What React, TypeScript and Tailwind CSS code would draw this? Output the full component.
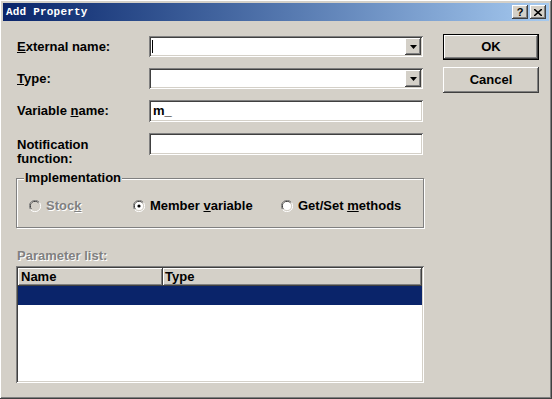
const raised =
  "shadow-[inset_-1px_-1px_0_#404040,inset_1px_1px_0_#ffffff,inset_-2px_-2px_0_#808080,inset_2px_2px_0_#d4d0c8]";
const sunken =
  "shadow-[inset_1px_1px_0_#808080,inset_-1px_-1px_0_#ffffff,inset_2px_2px_0_#404040,inset_-2px_-2px_0_#d4d0c8]";

function DropArrow() {
  return (
    <div className={`w-[16px] h-[17px] bg-[#d4d0c8] flex items-center justify-center ${raised}`}>
      <svg width="7" height="4" viewBox="0 0 7 4">
        <path d="M0 0h7L3.5 4z" fill="#000" />
      </svg>
    </div>
  );
}

function Combo({ caret }: { caret?: boolean }) {
  return (
    <div className={`w-[274px] h-[21px] bg-white flex items-center justify-between pl-[3px] pr-[2px] ${sunken}`}>
      <span className={caret ? "w-px h-[13px] bg-black" : ""} />
      <DropArrow />
    </div>
  );
}

function Edit({ value }: { value?: string }) {
  return (
    <div className={`w-[274px] h-[22px] bg-white flex items-center px-[4px] text-[13px] font-bold ${sunken}`}>
      {value}
    </div>
  );
}

function Radio({ checked, disabled }: { checked?: boolean; disabled?: boolean }) {
  return (
    <svg width="12" height="12" viewBox="0 0 12 12" className="shrink-0">
      <path d="M10.5 2.5A5 5 0 0 0 1.5 9.5" stroke="#808080" fill="none" />
      <path d="M9.5 3A4.3 4.3 0 0 0 2.5 9" stroke="#404040" fill="none" />
      <circle cx="6" cy="6" r="4" fill={disabled ? "#d4d0c8" : "#fff"} />
      <path d="M1.5 9.5A5 5 0 0 0 10.5 2.5" stroke="#fff" fill="none" />
      {checked && <circle cx="6" cy="6" r="1.6" fill="#000" />}
    </svg>
  );
}

function Button({ label, isDefault }: { label: string; isDefault?: boolean }) {
  return (
    <div
      className={`w-[96px] h-[26px] flex items-center justify-center text-[13px] font-bold bg-[#d4d0c8] ${
        isDefault ? "border border-black" : ""
      } ${raised}`}
    >
      {label}
    </div>
  );
}

export default function App() {
  return (
    <div
      className={`w-[552px] h-[399px] bg-[#d4d0c8] p-[3px] flex flex-col ${raised} text-black`}
      style={{ fontFamily: '"Liberation Sans", Arial, sans-serif' }}
    >
      <div className="h-[18px] bg-linear-to-r from-[#0a246a] to-[#a6caf0] flex items-center justify-between pl-[3px] pr-[3px]">
        <span className="text-white font-bold text-[11px] tracking-[0.2px]" style={{ fontFamily: '"Liberation Mono", monospace' }}>
          Add Property
        </span>
        <div className="flex gap-[2px]">
          <div className={`w-[16px] h-[14px] bg-[#d4d0c8] flex items-center justify-center text-[11px] font-bold leading-none ${raised}`}>?</div>
          <div className={`w-[16px] h-[14px] bg-[#d4d0c8] flex items-center justify-center ${raised}`}>
            <svg width="8" height="7" viewBox="0 0 8 7">
              <path d="M0 0l8 7M8 0L0 7" stroke="#000" strokeWidth="1.6" />
            </svg>
          </div>
        </div>
      </div>

      <div className="flex pt-[15px] pl-[13px]">
        <div className="w-[408px] flex flex-col text-[13px] font-bold">
          <div className="flex items-center h-[21px] pl-[1px]">
            <span className="w-[132px]"><u>E</u>xternal name:</span>
            <Combo caret />
          </div>
          <div className="flex items-center h-[21px] mt-[11px] pl-[1px]">
            <span className="w-[132px]"><u>T</u>ype:</span>
            <Combo />
          </div>
          <div className="flex items-center h-[22px] mt-[11px] pl-[1px]">
            <span className="w-[132px]">Variable <u>n</u>ame:</span>
            <Edit value="m_" />
          </div>
          <div className="flex items-start mt-[11px] pl-[1px]">
            <span className="w-[132px] leading-[14px] pt-[5px]">Notification<br />function:</span>
            <Edit />
          </div>

          <div className="relative mt-[12px] h-[50px] w-[408px] border border-[#808080] shadow-[1px_1px_0_#fff,inset_1px_1px_0_#fff]">
            <span className="absolute left-[7px] top-[-9px] bg-[#d4d0c8] px-[1px] leading-[16px]">Implementation</span>
            <div className="flex items-center h-full pt-[6px] pl-[12px]">
              <div className="flex items-center gap-[5px] w-[104px] text-[#808080] [text-shadow:1px_1px_0_#fff]">
                <Radio disabled />
                <span>Stoc<u>k</u></span>
              </div>
              <div className="flex items-center gap-[5px] w-[148px]">
                <Radio checked />
                <span>Member <u>v</u>ariable</span>
              </div>
              <div className="flex items-center gap-[5px]">
                <Radio />
                <span>Get/Set <u>m</u>ethods</span>
              </div>
            </div>
          </div>

          <div className="mt-[20px] pl-[1px] h-[16px] leading-[16px] text-[#808080] [text-shadow:1px_1px_0_#fff]">
            Parameter list:
          </div>

          <div className={`mt-[2px] w-[408px] h-[117px] bg-white p-[2px] flex flex-col ${sunken}`}>
            <div className="flex h-[18px] shrink-0">
              <div className={`w-[145px] bg-[#d4d0c8] pl-[3px] leading-[18px] ${raised}`}>Name</div>
              <div className={`flex-1 bg-[#d4d0c8] pl-[2px] leading-[18px] ${raised}`}>Type</div>
            </div>
            <div className="h-[19px] bg-[#0a246a]" />
          </div>
        </div>

        <div className="ml-[19px] flex flex-col gap-[7px] -mt-[2px]">
          <Button label="OK" isDefault />
          <Button label="Cancel" />
        </div>
      </div>
    </div>
  );
}
